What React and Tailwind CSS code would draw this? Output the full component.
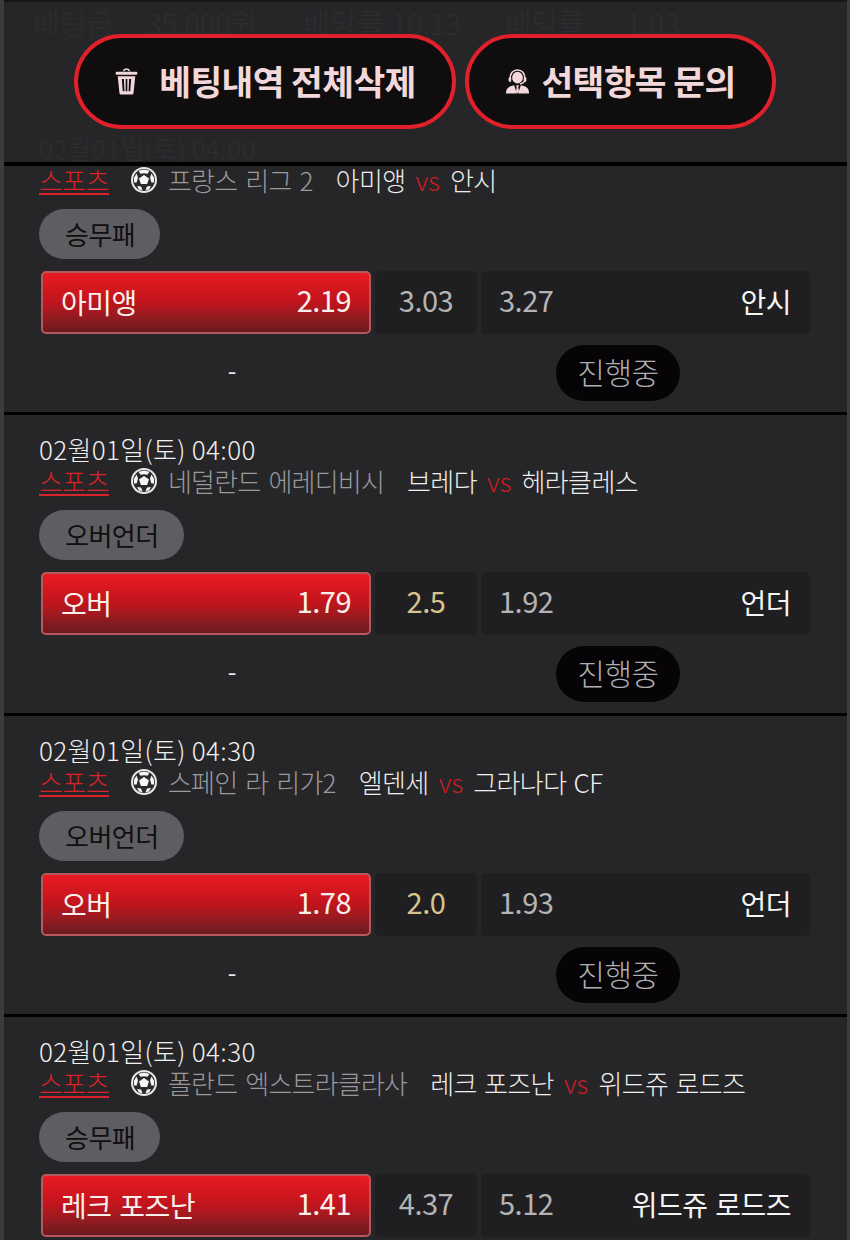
import React from 'react'

function Ball() {
  return (
    <svg width="28" height="28" viewBox="0 0 28 28" className="shrink-0">
      <circle cx="14" cy="14" r="13" fill="#e8e8e8" />
      <circle cx="14" cy="14" r="11" fill="#2a2a2a" />
      <polygon points="14,9 19,12.6 17.1,18 10.9,18 9,12.6" fill="#f6f6f6" />
      <path d="M8.5 4.8 L14 3.6 L19.5 4.8 L17.5 7.8 L14 7.3 L10.5 7.8 Z" fill="#f6f6f6" />
      <path d="M3.8 12 L6.5 7.5 L8 11.5 L6.6 16.5 L4 16.5 Z" fill="#f6f6f6" />
      <path d="M24.2 12 L21.5 7.5 L20 11.5 L21.4 16.5 L24 16.5 Z" fill="#f6f6f6" />
      <path d="M7 20 L11 20.5 L12.6 24.4 L9 23.4 Z" fill="#f6f6f6" />
      <path d="M21 20 L17 20.5 L15.4 24.4 L19 23.4 Z" fill="#f6f6f6" />
    </svg>
  )
}

function TrashIcon() {
  return (
    <svg width="25" height="29" viewBox="0 0 24 28" fill="#f2d8da">
      <path d="M8.5 4.2 C8.8 2 10 1.5 12 1.5 C14 1.5 15.2 2 15.5 4.2 L14 4.2 C13.8 3.2 13.2 3 12 3 C10.8 3 10.2 3.2 10 4.2 Z" />
      <rect x="1.5" y="4.5" width="21" height="3" rx="1.2" />
      <path fillRule="evenodd" d="M3.5 9 H20.5 L18.8 25 C18.7 26 18 26.5 17 26.5 H7 C6 26.5 5.3 26 5.2 25 Z M7.5 11.5 L8.4 23.5 H10 L9.5 11.5 Z M11.2 11.5 V23.5 H12.8 V11.5 Z M14.5 11.5 L14 23.5 H15.6 L16.5 11.5 Z" />
    </svg>
  )
}

function AgentIcon() {
  return (
    <svg width="25" height="27" viewBox="0 0 26 28" fill="#f2d8da">
      <path fill="none" stroke="#f2d8da" strokeWidth="1.6" d="M5.5 12 C5 5 8.5 2 13 2 C17.5 2 21 5 20.5 12 C20.4 14.5 18.5 16.2 15.5 16.6" />
      <ellipse cx="13" cy="10" rx="5.6" ry="6.2" />
      <rect x="3.8" y="9.5" width="2.6" height="5" rx="1.2" />
      <rect x="19.6" y="9.5" width="2.6" height="5" rx="1.2" />
      <path d="M1 26.5 C1 21.5 3 19.2 9.5 18 L12.4 26.5 Z" />
      <path d="M25 26.5 C25 21.5 23 19.2 16.5 18 L13.6 26.5 Z" />
      <path d="M11.6 18 H14.4 L13.8 20.2 L14.6 24.5 L13 26.5 L11.4 24.5 L12.2 20.2 Z" />
    </svg>
  )
}

function ActionButton({ icon, label, className }) {
  return (
    <button className={`h-[95px] flex items-center justify-center rounded-full border-[4px] border-[#e0202a] bg-[#0f0d0e] text-[#f2d8da] text-[34.5px] font-bold tracking-[-0.6px] whitespace-nowrap ${className}`}>
      {icon}
      <span className="pb-[2px]">{label}</span>
    </button>
  )
}

function BetRow({ league, home, away, homeName, awayName, market, homeOdd, midOdd, awayOdd, midGold, status, date }) {
  return (
    <div className="border-b-[3px] border-black bg-[#262528] pl-[35px] pr-[37px]">
      {date ? (
        <div className="pt-[17px] h-[51px] text-[26px] leading-[34px] font-light tracking-[0.33px] text-[#f0f0f0]">{date}</div>
      ) : null}
      <div className={`h-[32px] flex items-center pb-[3px] text-[26px] whitespace-nowrap font-light ${date ? '' : '-mt-[1px]'}`}>
        <span className="text-[#d8232a] underline underline-offset-[2px] decoration-[2px] w-[91px] tracking-[-0.6px]">스포츠</span>
        <Ball />
        <span className="text-[#9a9a9c] ml-[10px] tracking-[-0.8px] [word-spacing:3px]">{league}</span>
        <span className="text-[#eeeeee] ml-[23px] tracking-[-0.6px] [word-spacing:2px]">{home}</span>
        <span className="text-[#c81e24] mx-[10px]">vs</span>
        <span className="text-[#eeeeee] tracking-[-0.6px] [word-spacing:2px]">{away}</span>
      </div>
      <div className="mt-[12px] h-[50px] inline-flex items-center rounded-full bg-[#5e5d62] pl-[26px] pr-[25px] text-[26px] tracking-[-0.5px] text-[#0f0f10] align-top">
        <span className="pb-[2px]">{market}</span>
      </div>
      <div className="mt-[12px] flex h-[63px] gap-[4px] text-[29px] leading-none">
        <div className="w-[330px] ml-[2px] rounded-[5px] border-[2px] border-[#b45a5e] bg-gradient-to-b from-[#ea1a22] via-[#c0141c] to-[#6a1a20] flex items-center justify-between pl-[18px] pr-[18px] pb-[6px] text-[#f7f0ec]">
          <span className="pt-[4px] tracking-[-0.5px] text-[28px] [word-spacing:2px]">{homeName || home}</span>
          <span className="tracking-[-0.5px]">{homeOdd}</span>
        </div>
        <div className={`w-[102px] rounded-[5px] bg-[#1f1e21] flex items-center justify-center pb-[6px] tracking-[-0.5px] ${midGold ? 'text-[#d6c48c]' : 'text-[#b4b4b4]'}`}>
          {midOdd}
        </div>
        <div className="flex-1 rounded-[5px] bg-[#1f1e21] flex items-center justify-between pl-[18px] pr-[19px] pb-[6px]">
          <span className="text-[#b4b4b4] tracking-[-0.5px]">{awayOdd}</span>
          <span className="pt-[3px] text-[#f5f5f5] text-[28px] tracking-[-0.5px] [word-spacing:2px]">{awayName || away}</span>
        </div>
      </div>
      <div className="mt-[11px] mb-[11px] flex items-center h-[56px]">
        <span className="w-[386px] pb-[6px] text-center text-[#e8e8e8] text-[25px]">-</span>
        <div className="ml-[131px] h-[56px] w-[124px] rounded-full bg-[#060407] flex items-center justify-center pb-[3px] text-[#aeaeb0] text-[30px] tracking-[-0.5px] font-light">
          {status}
        </div>
      </div>
    </div>
  )
}

export default function App() {
  const rows = [
    { date: null, league: '프랑스 리그 2', home: '아미앵', away: '안시', market: '승무패', homeOdd: '2.19', midOdd: '3.03', awayOdd: '3.27', status: '진행중' },
    { date: '02월01일(토) 04:00', league: '네덜란드 에레디비시', home: '브레다', away: '헤라클레스', market: '오버언더', homeName: '오버', awayName: '언더', homeOdd: '1.79', midOdd: '2.5', awayOdd: '1.92', midGold: true, status: '진행중' },
    { date: '02월01일(토) 04:30', league: '스페인 라 리가2', home: '엘덴세', away: '그라나다 CF', market: '오버언더', homeName: '오버', awayName: '언더', homeOdd: '1.78', midOdd: '2.0', awayOdd: '1.93', midGold: true, status: '진행중' },
    { date: '02월01일(토) 04:30', league: '폴란드 엑스트라클라사', home: '레크 포즈난', away: '위드쥬 로드즈', market: '승무패', homeOdd: '1.41', midOdd: '4.37', awayOdd: '5.12', status: '진행중' },
  ]

  return (
    <div className="h-[1240px] w-[850px] overflow-hidden bg-[#262528] border-l-[4px] border-r-[3px] border-[#3c3b3e] font-['Noto_Sans_CJK_KR',sans-serif]">
      <div className="relative -ml-[4px] -mr-[3px] h-[166px] bg-[#262527] border-t-[2px] border-t-[#161616] border-b-[4px] border-b-black overflow-hidden">
        <div className="pl-[33px] flex text-[29px] leading-[40px] font-light text-[#2e2d2f] whitespace-nowrap">
          <span>배팅금</span>
          <span className="ml-[33px]">35,000원</span>
          <span className="ml-[46px]">배당률</span>
          <span className="ml-[8px]">10.13</span>
          <span className="ml-[44px]">배당률</span>
          <span className="ml-[41px]">1.03</span>
        </div>
        <div className="absolute left-[39px] top-[129px] text-[26px] leading-[34px] font-light tracking-[0.33px] text-[#2e2d2f]">02월01일(토) 04:00</div>
        <div className="absolute left-[74px] top-[32px] flex gap-[9px]">
          <ActionButton className="w-[382px] gap-[20px]" icon={<TrashIcon />} label="베팅내역 전체삭제" />
          <ActionButton className="w-[311px] gap-[11px]" icon={<AgentIcon />} label="선택항목 문의" />
        </div>
      </div>
      {rows.map((r, i) => (
        <BetRow key={i} {...r} />
      ))}
    </div>
  )
}
